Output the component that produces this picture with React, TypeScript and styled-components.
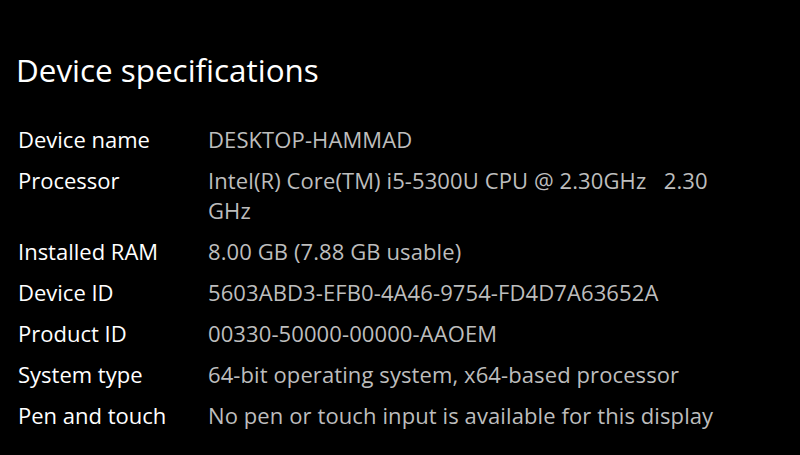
import styled, { createGlobalStyle } from 'styled-components'

const GlobalStyle = createGlobalStyle`
    html, body {
        margin: 0;
        padding: 0;
        background: #000;
    }
    body {
        font-family: "Open Sans", "Noto Sans", sans-serif;
        -webkit-font-smoothing: antialiased;
    }
`

interface SpecType {
    label: string;
    value: string;
}

const specs: SpecType[] = [
    { label: 'Device name', value: 'DESKTOP-HAMMAD' },
    { label: 'Processor', value: 'Intel(R) Core(TM) i5-5300U CPU @ 2.30GHz\u00a0\u00a0\u00a02.30 GHz' },
    { label: 'Installed RAM', value: '8.00 GB (7.88 GB usable)' },
    { label: 'Device ID', value: '5603ABD3-EFB0-4A46-9754-FD4D7A63652A' },
    { label: 'Product ID', value: '00330-50000-00000-AAOEM' },
    { label: 'System type', value: '64-bit operating system, x64-based processor' },
    { label: 'Pen and touch', value: 'No pen or touch input is available for this display' },
]

export default function App() {
    return (
        <>
            <GlobalStyle />
            <Page>
                <Title>Device specifications</Title>
                <SpecList>
                    {specs.map(spec => (
                        <SpecRow key={spec.label}>
                            <Label>{spec.label}</Label>
                            <Value>{spec.value}</Value>
                        </SpecRow>
                    ))}
                </SpecList>
            </Page>
        </>
    )
}

const Page = styled.div`
    width: 800px;
    height: 455px;
    box-sizing: border-box;
    padding: 50px 0 0 16px;
    background: #000;
    overflow: hidden;
`

const Title = styled.h1`
    margin: 0;
    font-size: 31.4px;
    font-weight: 400;
    line-height: 40px;
    color: #fff;
`

const SpecList = styled.div`
    display: flex;
    flex-direction: column;
    gap: 11px;
    margin-top: 34px;
`

const SpecRow = styled.div`
    display: grid;
    grid-template-columns: 192px 525px;
    font-size: 22px;
    line-height: 30px;
`

const Label = styled.div`
    color: #fff;
    padding-left: 2px;
`

const Value = styled.div`
    color: #bdbdbd;
    letter-spacing: 0.1px;
`
